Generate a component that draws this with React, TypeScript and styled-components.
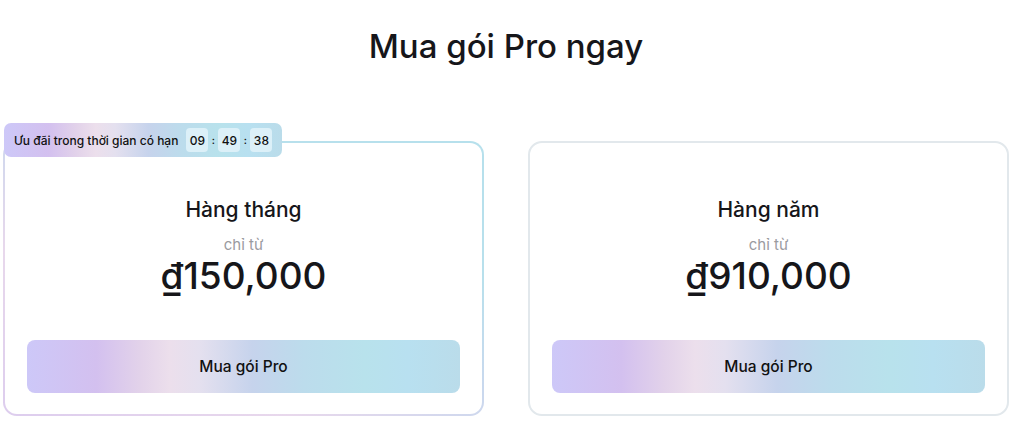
import React from 'react'
import styled, { createGlobalStyle, css } from 'styled-components'

const GlobalStyle = createGlobalStyle`
  body {
    margin: 0;
    background: #ffffff;
    font-family: Inter, "Noto Sans", "Liberation Sans", sans-serif;
    color: #16161a;
  }
`

const proGradient = `linear-gradient(
  90deg,
  #cdc8f8 0%,
  #d3c0ef 16%,
  #e2d2ea 26%,
  #ecdfec 33%,
  #e4e0ef 40%,
  #c6d3ec 52%,
  #bcdcec 64%,
  #b8e2ec 78%,
  #b8e0f0 88%,
  #badcea 100%
)`

const Page = styled.div`
  width: 1006px;
  margin-left: 3px;
  padding-top: 26px;
`

const Title = styled.h1`
  margin: 0 0 75px;
  text-align: center;
  font-size: 33px;
  line-height: 40px;
  font-weight: 500;
`

const Plans = styled.div`
  display: grid;
  grid-template-columns: 481px 481px;
  column-gap: 44px;
`

const Card = styled.div<{ $highlight?: boolean }>`
  position: relative;
  display: flex;
  flex-direction: column;
  align-items: center;
  padding: 53px 22px 21px;
  border-radius: 14px;
  border: 2px solid #e2e8ec;

  ${({ $highlight }) =>
    $highlight &&
    css`
      border-color: transparent;
      background:
        linear-gradient(#ffffff, #ffffff) padding-box,
        linear-gradient(30deg, #ddcdee 0%, #e8d8ec 30%, #c9d8ee 55%, #b8e0ec 75%, #b6e0ec 100%) border-box;
    `}
`

const Badge = styled.div`
  position: absolute;
  top: -20px;
  left: -1px;
  display: flex;
  align-items: center;
  height: 34px;
  padding: 0 10px;
  border-radius: 7px;
  background: ${proGradient};
  font-size: 12px;
  font-weight: 500;
  color: #111;
  white-space: nowrap;
`

const Timer = styled.div`
  display: flex;
  align-items: center;
  margin-left: 8px;
`

const TimeBox = styled.span`
  display: inline-flex;
  align-items: center;
  justify-content: center;
  width: 22px;
  height: 24px;
  border-radius: 4px;
  background: #dcf0f8;
  font-size: 12px;
  font-weight: 500;
`

const Colon = styled.span`
  width: 10px;
  text-align: center;
  font-size: 10px;
  font-weight: 600;
`

const PlanName = styled.div`
  font-size: 21px;
  line-height: 28px;
  font-weight: 500;
`

const FromLabel = styled.div`
  margin-top: 13px;
  font-size: 15px;
  line-height: 15px;
  color: #9b9b9f;
`

const Price = styled.div`
  margin-top: 5px;
  font-size: 37px;
  line-height: 38px;
  font-weight: 500;
`

const BuyButton = styled.button`
  margin-top: 45px;
  width: 100%;
  height: 53px;
  border: none;
  border-radius: 8px;
  background: ${proGradient};
  font-family: inherit;
  font-size: 15.5px;
  font-weight: 500;
  color: #111;
  cursor: pointer;
`

interface Plan {
  name: string
  price: string
  highlight?: boolean
}

const plans: Plan[] = [
  { name: 'Hàng tháng', price: '₫150,000', highlight: true },
  { name: 'Hàng năm', price: '₫910,000' },
]

const Countdown = ({ parts }: { parts: string[] }) => (
  <Timer>
    {parts.map((p, i) => (
      <React.Fragment key={i}>
        {i > 0 && <Colon>:</Colon>}
        <TimeBox>{p}</TimeBox>
      </React.Fragment>
    ))}
  </Timer>
)

const PlanCard = ({ plan }: { plan: Plan }) => (
  <Card $highlight={plan.highlight}>
    {plan.highlight && (
      <Badge>
        Ưu đãi trong thời gian có hạn
        <Countdown parts={['09', '49', '38']} />
      </Badge>
    )}
    <PlanName>{plan.name}</PlanName>
    <FromLabel>chỉ từ</FromLabel>
    <Price>{plan.price}</Price>
    <BuyButton>Mua gói Pro</BuyButton>
  </Card>
)

export default function App() {
  return (
    <>
      <GlobalStyle />
      <Page>
        <Title>Mua gói Pro ngay</Title>
        <Plans>
          {plans.map((plan) => (
            <PlanCard key={plan.name} plan={plan} />
          ))}
        </Plans>
      </Page>
    </>
  )
}
